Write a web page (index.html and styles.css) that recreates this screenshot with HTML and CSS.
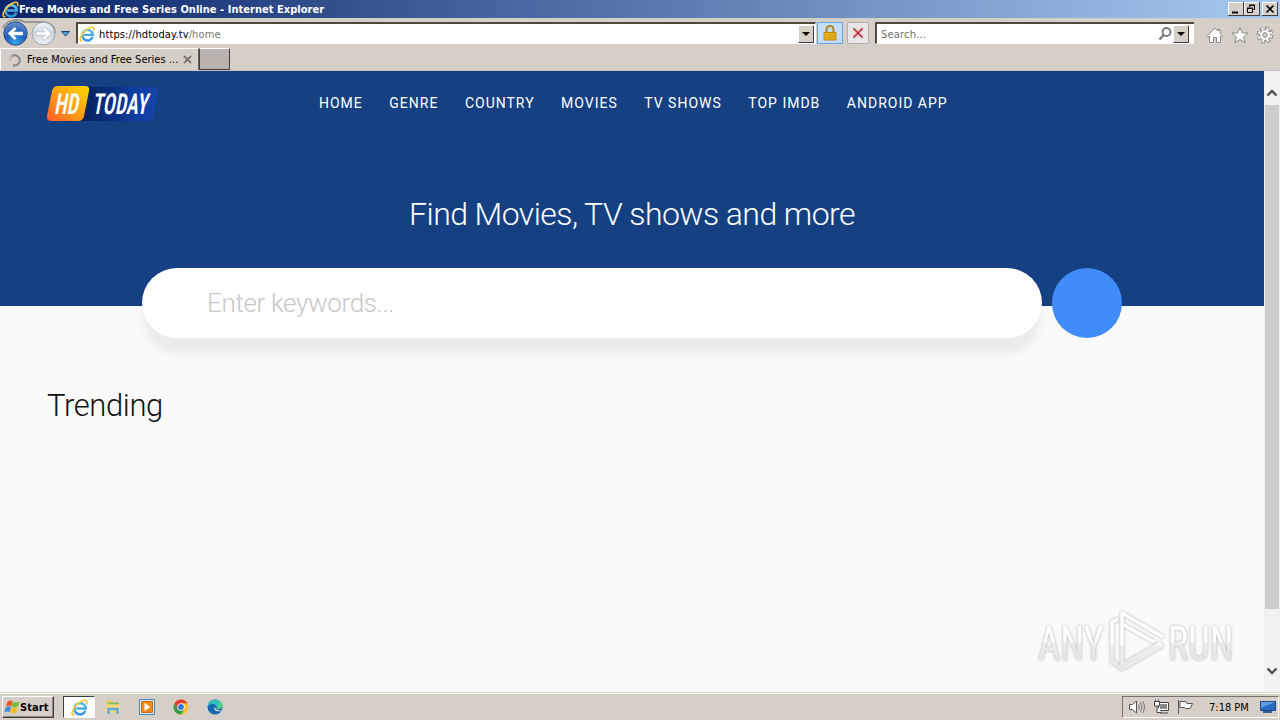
FILE: index.html
```html
<!DOCTYPE html>
<html lang="en">
<head>
    <meta charset="UTF-8">
    <meta name="viewport" content="width=device-width, initial-scale=1.0">
    <title>Free Movies and Free Series Online</title>
    <link rel="stylesheet" href="styles.css">
</head>
<body>
    <!-- shared icons -->
    <svg class="defs" width="0" height="0">
        <defs>
            <linearGradient id="ring" x1="0" y1="0" x2="1" y2="1">
                <stop offset="0" stop-color="#ffe14a"/>
                <stop offset="1" stop-color="#e8a80c"/>
            </linearGradient>
            <linearGradient id="blue" x1="0" y1="0" x2="0" y2="16" gradientUnits="userSpaceOnUse">
                <stop offset="0" stop-color="#6fd0f8"/>
                <stop offset="1" stop-color="#2b8ed8"/>
            </linearGradient>
            <symbol id="ie" viewBox="0 0 16 16">
                <path d="M13.600 11A5.300 5.300 0 1 1 13.900 8.900H5" fill="none" stroke="url(#blue)" stroke-width="2.400"/>
                <path d="M3.300 14.600C.5 15.600.2 12.700 2.600 8.800 5.600 4 11.500.2 14 1.400c1.300.7 1 2.200.4 3.600" fill="none" stroke="url(#ring)" stroke-width="1.500"/>
            </symbol>
        </defs>
    </svg>

    <div class="titlebar">
        <svg class="title-icon" width="17" height="17"><use href="#ie"/></svg>
        <span class="title">Free Movies and Free Series Online - Internet Explorer</span>
        <div class="window-buttons">
            <svg class="win" viewBox="0 0 16 14"><path d="M4 10.500h6" stroke="#000" stroke-width="2"/></svg>
            <svg class="win" viewBox="0 0 16 14"><path d="M5.500 5V3.500h5v4H9M5 3h6M3.500 6.500h5v4h-5zM3 6h6" fill="none" stroke="#000"/></svg>
            <svg class="win close" viewBox="0 0 16 14"><path d="M4.500 3.500l7 7M11.500 3.500l-7 7" stroke="#000" stroke-width="1.600"/></svg>
        </div>
    </div>

    <div class="toolbar">
        <svg class="nav-buttons" width="76" height="29" viewBox="0 0 76 29">
            <defs>
                <radialGradient id="back" cx=".5" cy=".9" r=".9">
                    <stop offset="0" stop-color="#3da4ee"/>
                    <stop offset=".5" stop-color="#1d5fb9"/>
                    <stop offset="1" stop-color="#6b93cd"/>
                </radialGradient>
                <linearGradient id="fwd" x1="0" y1="0" x2="0" y2="1">
                    <stop offset="0" stop-color="#f4f6f8"/>
                    <stop offset=".5" stop-color="#ccd4dd"/>
                    <stop offset="1" stop-color="#eef3f8"/>
                </linearGradient>
            </defs>
            <path d="M3 10C8 0 20 1 25 4h16c8 0 14 4 14 11" fill="none" stroke="#9a9792" stroke-width="2"/>
            <circle cx="15.500" cy="15.500" r="11.700" fill="url(#back)" stroke="#244b86"/>
            <path d="M7.700 15.500l7-6.500 1.900 1.900-2.900 2.900H23v3.400h-9.300l2.900 2.900-1.900 1.900z" fill="#fff"/>
            <circle cx="43.500" cy="15.500" r="11.300" fill="url(#fwd)" stroke="#9da4ac"/>
            <path d="M51.300 15.500l-7-6.500-1.900 1.900 2.900 2.900H36v3.400h9.300l-2.900 2.900 1.900 1.900z" fill="#fff" stroke="#aab2ba" stroke-width=".6"/>
            <path d="M61.500 13.500h8l-4 4.500z" fill="#4f9fdc" stroke="#17406e"/>
        </svg>
        <div class="address">
            <svg width="16" height="16"><use href="#ie"/></svg>
            <span class="url">https://hdtoday.tv<span class="path">/home</span></span>
            <span class="drop"></span>
        </div>
        <div class="tool lock">
            <svg width="16" height="18" viewBox="0 0 16 18">
                <path d="M4.500 9V5.500a3.500 3.500 0 0 1 7 0V9" fill="none" stroke="#b1861c" stroke-width="2"/>
                <path d="M2 8.500h12V16H2z" fill="#e9b21c" stroke="#c48a10"/>
                <path d="M2 11h12M2 13.500h12M8 9v7" stroke="#c79a1c" stroke-width=".7"/>
            </svg>
        </div>
        <div class="tool stop">
            <svg width="12" height="12" viewBox="0 0 12 12"><path d="M1.500 1.500l9 9M10.500 1.500l-9 9" stroke="#e27a82" stroke-width="2.600"/><path d="M1.500 1.500l9 9M10.500 1.500l-9 9" stroke="#a02432"/></svg>
        </div>
        <div class="search">
            <span class="search-text">Search...</span>
            <svg width="16" height="16" viewBox="0 0 16 16"><circle cx="9.500" cy="6" r="4" fill="none" stroke="#777" stroke-width="1.800"/><path d="M6.600 9L2.500 13.500" stroke="#777" stroke-width="2.200"/></svg>
            <span class="drop"></span>
        </div>
        <div class="commands">
            <svg width="18" height="18" viewBox="0 0 18 18"><path d="M1.500 9.500L9 2l3 3V3.500h2V7l2.500 2.500-1 1.200-1-.7v6.500h-4v-5h-3v5h-4V10l-1 .7z" fill="#fff" stroke="#8a8a8a"/></svg>
            <svg width="18" height="18" viewBox="0 0 18 18"><path d="M9 1.500l2.200 5.300 5.800.4-4.400 3.700 1.400 5.600-5-3-5 3 1.400-5.600L1 7.200l5.800-.4z" fill="#fff" stroke="#8a8a8a"/></svg>
            <svg width="18" height="18" viewBox="0 0 18 18">
                <circle cx="9" cy="9" r="6.800" fill="none" stroke="#8a8a8a" stroke-width="3.200" stroke-dasharray="3.300 2.041"/>
                <circle cx="9" cy="9" r="5.500" fill="#fff" stroke="#8a8a8a"/>
                <circle cx="9" cy="9" r="6.200" fill="none" stroke="#fff" stroke-width="2.600" stroke-dasharray="1.600 3.270" stroke-dashoffset="-.7"/>
                <circle cx="9" cy="9" r="2.300" fill="#d6cfc7" stroke="#8a8a8a"/>
            </svg>
        </div>
    </div>

    <div class="tabs">
        <div class="tab">
            <svg width="14" height="14" viewBox="0 0 14 14"><path d="M3.500 3.500A5 5 0 1 1 5 12" fill="none" stroke="#8b8b8b" stroke-width="2"/><path d="M3.500 3.500A5 5 0 0 0 2.200 8" fill="none" stroke="#bbb6b0" stroke-width="2"/></svg>
            <span class="tab-title">Free Movies and Free Series ...</span>
            <svg width="9" height="9" viewBox="0 0 9 9"><path d="M1 1l7 7M8 1L1 8" stroke="#7d7872" stroke-width="1.900"/></svg>
        </div>
        <div class="new-tab"></div>
    </div>

    <div class="viewport">
        <div class="page">
            <header class="hero">
                <div class="header">
                    <svg class="logo" width="112" height="36" viewBox="0 0 112 36">
                        <defs>
                            <linearGradient id="hd" x1="0" y1="1" x2="1" y2="0">
                                <stop offset="0" stop-color="#ff5a2a"/>
                                <stop offset=".45" stop-color="#ff9b16"/>
                                <stop offset="1" stop-color="#ffd600"/>
                            </linearGradient>
                            <linearGradient id="today" x1="0" y1="0" x2="1" y2="0">
                                <stop offset=".1" stop-color="#06235f"/>
                                <stop offset=".8" stop-color="#1040a8"/>
                                <stop offset="1" stop-color="#1545a5"/>
                            </linearGradient>
                        </defs>
                        <path d="M38 1h69q5 0 4 5l-5 25q-1 4-5 4H30z" fill="url(#today)"/>
                        <path d="M11 0h27q5 0 4 5l-5 25q-1 5-6 5H5q-6 0-5-5L5 5q1-5 6-5z" fill="url(#hd)"/>
                        <g class="logo-text" fill="#fff">
                            <text transform="translate(7 28) skewX(-10) scale(.8 1)" textLength="30" lengthAdjust="spacingAndGlyphs">HD</text>
                            <text transform="translate(45 28) skewX(-10) scale(.8 1)" textLength="69" lengthAdjust="spacingAndGlyphs">TODAY</text>
                        </g>
                    </svg>
                    <nav class="menu">
                        <a>HOME</a>
                        <a>GENRE</a>
                        <a>COUNTRY</a>
                        <a>MOVIES</a>
                        <a>TV SHOWS</a>
                        <a>TOP IMDB</a>
                        <a>ANDROID APP</a>
                    </nav>
                </div>
                <h1>Find Movies, TV shows and more</h1>
            </header>
            <div class="search-row">
                <div class="keywords">Enter keywords...</div>
                <div class="go"></div>
            </div>
            <h2>Trending</h2>
        </div>
        <div class="scrollbar">
            <svg width="16" height="34" viewBox="0 0 16 34"><path d="M3.500 24.500L8 20l4.500 4.500" fill="none" stroke="#505050" stroke-width="2.400"/></svg>
            <div class="thumb"></div>
            <svg class="down" width="16" height="34" viewBox="0 0 16 34"><path d="M3.500 10.500L8 15l4.500-4.500" fill="none" stroke="#505050" stroke-width="2.400"/></svg>
        </div>
        <svg class="watermark" width="210" height="76" viewBox="0 0 210 76">
            <defs>
                <linearGradient id="wm" x1="0" y1="0" x2="0" y2="76" gradientUnits="userSpaceOnUse">
                    <stop offset=".5" stop-color="#fff"/>
                    <stop offset=".53" stop-color="#ededed"/>
                    <stop offset="1" stop-color="#e8e8e8"/>
                </linearGradient>
                <linearGradient id="wm-letters" x1="0" y1="-35" x2="0" y2="0" gradientUnits="userSpaceOnUse">
                    <stop offset=".48" stop-color="#fff"/>
                    <stop offset=".52" stop-color="#ececec"/>
                    <stop offset="1" stop-color="#e4e4e4"/>
                </linearGradient>
            </defs>
            <g class="wm-text" fill="url(#wm-letters)">
                <text transform="translate(8 54) scale(.8 1)" textLength="82" lengthAdjust="spacingAndGlyphs">ANY</text>
                <text transform="translate(138 54) scale(.8 1)" textLength="82" lengthAdjust="spacingAndGlyphs">RUN</text>
            </g>
            <g fill="none" stroke="url(#wm)" stroke-width="3.500" stroke-linejoin="round">
                <path d="M82 57V16l6-3"/>
                <path d="M131 37L92 59V7l41 24"/>
                <path d="M92 18l32 18M83 56l9 7 41-24"/>
            </g>
        </svg>
    </div>

    <div class="taskbar">
        <div class="start">
            <svg width="16" height="16" viewBox="0 0 16 16">
                <path d="M3.500 2.500q3-2 5 0L7.200 7.500q-2-1.500-5.200 0z" fill="#e8562a"/>
                <path d="M9 2.800q3 1.500 6.500-.3L14 7.600q-3 1.500-6.300 0z" fill="#76b83c"/>
                <path d="M1.800 8.200q3-1.600 5.200 0L5.600 13.200q-2-1.600-5.300 0z" fill="#3e8bdc"/>
                <path d="M7.500 8.300q3 1.600 6.300 0l-1.400 5.200q-3 1.500-6.300 0z" fill="#f4bd25"/>
            </svg>
            <span>Start</span>
        </div>
        <div class="apps">
            <div class="app current"><svg width="17" height="17"><use href="#ie" width="17" height="17"/></svg></div>
            <div class="app">
                <svg width="16" height="16" viewBox="0 0 16 16"><path d="M1 3V1.500h5L7 3h7v9H1z" fill="#e9c95e"/><path d="M3 3.500h11v2H3z" fill="#79c46a"/><path d="M1 5.500h14v8H1z" fill="#f3da80"/><path d="M3.500 15V10h9v5" fill="none" stroke="#64a9d6" stroke-width="2.500"/></svg>
            </div>
            <div class="app">
                <svg width="16" height="16" viewBox="0 0 16 16"><path d="M.5.500h15v15H.5z" fill="#d9ebf8" stroke="#4c88bd"/><path d="M2.500 2.500h11v11h-11z" fill="#f28a16" stroke="#cc6d0c"/><path d="M5.500 4l6 4-6 4z" fill="#fff"/></svg>
            </div>
            <div class="app">
                <svg width="16" height="16" viewBox="0 0 16 16"><circle cx="8" cy="8" r="7.500" fill="#f6c32b"/><path d="M1.500 4.250A7.500 7.500 0 0 1 14.500 4.250H8L4.750 9.880z" fill="#dd4033"/><path d="M1.500 4.250A7.500 7.500 0 0 0 8 15.500L11.250 9.880H4.750z" fill="#2f9f50"/><circle cx="8" cy="8" r="3.700" fill="#fff"/><circle cx="8" cy="8" r="2.900" fill="#3777df"/></svg>
            </div>
            <div class="app">
                <svg width="16" height="16" viewBox="0 0 16 16"><circle cx="8" cy="8" r="7.500" fill="#1467b4"/><path d="M.5 8C1 3.500 4 .5 8 .5c5 0 8 3.500 7.500 6.500-.5 3-4 3.500-6 2.500 1-2-1-4.500-4-4.500C3 5 1 6.500.5 8z" fill="#35bdbd"/><path d="M8 7.500C6 10 8 13.500 14.300 12 15 11 13 11.500 11.500 11 10 10.700 8 9.800 8 7.500z" fill="#d6cfc7"/><path d="M11 1.200c3 1.300 4.700 3.800 4.500 5.800-.5 3-4 3.500-6 2.500 2-2 3-5 1.500-8.300z" fill="#59ce83"/></svg>
            </div>
        </div>
        <div class="tray">
            <svg width="18" height="16" viewBox="0 0 18 16"><path d="M1.500 5.500h3L8.500 2v12l-4-3.500h-3z" fill="#fff" stroke="#555"/><path d="M10.500 5.500q1.500 2.500 0 5M12.500 3.500q3 4.500 0 9M14.500 2q4 6 0 12" fill="none" stroke="#777"/></svg>
            <svg width="17" height="16" viewBox="0 0 17 16"><path d="M5.500 3.500h10v8h-10zM7 14h8" fill="#fff" stroke="#444"/><path d="M7 5h7v5H7z" fill="#888"/><path d="M1.500 2.500h5V7h-5zM2.500.500v2M5.500.500v2M4 7v6.500h4" fill="#fff" stroke="#444"/></svg>
            <svg width="17" height="16" viewBox="0 0 17 16"><path d="M1.500 1v14M3 2.500h6l1 2h5.500L13 9.500H8.500l-1-1H3z" fill="#fff" stroke="#555"/></svg>
            <span class="clock">7:18 PM</span>
            <svg width="16" height="14" viewBox="0 0 16 14"><path d="M.5 1.500h15v9H.5z" fill="#2769c4" stroke="#1d4687"/><path d="M1 2h14L1 8z" fill="#629ce2"/><path d="M3 12h9" stroke="#365e94" stroke-width="2"/></svg>
        </div>
    </div>
</body>
</html>
```
FILE: styles.css
```css
* {
    box-sizing: border-box;
}
body {
    margin: 0;
    width: 1280px;
    height: 720px;
    overflow: hidden;
    display: flex;
    flex-direction: column;
    font-family: "DejaVu Sans Condensed", "DejaVu Sans", sans-serif;
    font-stretch: condensed;
    font-size: 11px;
    background: #d6cfc7;
}
svg {
    display: block;
    flex: none;
}
.defs {
    position: absolute;
}

/* window title */
.titlebar {
    height: 18px;
    flex: none;
    display: flex;
    align-items: center;
    padding: 0 2px;
    background: linear-gradient(to right, #0a246a, #a6caf0);
}
.title {
    color: #fff;
    font-weight: bold;
    letter-spacing: 0.03px;
    white-space: nowrap;
}
.window-buttons {
    display: flex;
    margin-left: auto;
}
.win {
    width: 16px;
    height: 14px;
    background: #d6cfc7;
    box-shadow: inset -1px -1px #404040, inset 1px 1px #fff;
}
.close {
    margin-left: 2px;
}

/* address row */
.toolbar {
    height: 29px;
    flex: none;
    display: flex;
    align-items: center;
    white-space: nowrap;
}
.address {
    width: 740px;
    height: 22px;
    margin-top: 1px;
    display: flex;
    align-items: center;
    padding: 0 1px 0 1px;
    background: #fff;
    border: 1px solid #fff;
    border-top: 2px solid #50483f;
    border-left: 2px solid #50483f;
}
.url {
    margin-left: 4px;
    padding-top: 1px;
    color: #000;
    letter-spacing: 0.12px;
}
.path {
    color: #777;
}
.drop {
    width: 16px;
    height: 18px;
    margin-left: auto;
    display: flex;
    align-items: center;
    justify-content: center;
    background: #d6cfc7;
    border: 1px solid #fff;
    border-right-color: #404040;
    border-bottom-color: #404040;
}
.drop::before {
    content: '';
    border: 4px solid transparent;
    border-top-color: #000;
    border-bottom: 0;
}
.tool {
    height: 22px;
    display: flex;
    align-items: center;
    justify-content: center;
}
.lock {
    width: 26px;
    margin: 1px 0 0 1px;
    background: #c4ddf8;
    border: 1px solid #66a7e8;
}
.stop {
    width: 22px;
    margin: 1px 0 0 4px;
    background: #e9e7e6;
    border: 1px solid #b2aeb0;
    border-radius: 2px;
}
.search {
    width: 319px;
    height: 22px;
    margin: 1px 0 0 6px;
    display: flex;
    align-items: center;
    padding: 0 5px 0 4px;
    background: #fff;
    border-top: 2px solid #50483f;
    border-left: 2px solid #50483f;
    border-bottom: 1px solid #fff;
}
.search svg {
    margin-left: auto;
}
.search .drop {
    margin-left: 0;
}
.search-text {
    padding-top: 1px;
    color: #707070;
    letter-spacing: 0.2px;
}
.commands {
    display: flex;
    gap: 7px;
    margin: 4px 0 0 12px;
}

/* tabs */
.tabs {
    height: 24px;
    flex: none;
    display: flex;
    border-bottom: 1px solid #c5c2c4;
}
.tab {
    width: 199px;
    margin-top: 1px;
    display: flex;
    align-items: center;
    padding: 0 6px 0 7px;
    border-top: 1px solid #fff;
    border-left: 1px solid #fff;
    border-right: 1px solid #6d6862;
}
.tab-title {
    margin: 0 auto 0 5px;
    letter-spacing: 0.03px;
    white-space: nowrap;
}
.new-tab {
    width: 31px;
    height: 22px;
    margin-top: 1px;
    background: #bab2ad;
    border: 1px solid #403c38;
    border-top-color: #fff;
}

/* web page */
.viewport {
    height: 621px;
    flex: none;
    display: flex;
    position: relative;
    font-family: Roboto, "Liberation Sans", sans-serif;
    font-stretch: normal;
}
.page {
    width: 1264px;
    background: #fafafa;
}
.hero {
    height: 235px;
    background: #154183;
    color: #fff;
}
.header {
    display: flex;
    align-items: flex-start;
    padding: 15px 0 0 47px;
}
.menu {
    display: flex;
    gap: 26.5px;
    margin: 8px 0 0 160px;
    font-size: 14px;
    line-height: 18px;
    letter-spacing: 1px;
    white-space: nowrap;
}
.logo {
    overflow: visible;
}
.logo-text {
    font-family: Roboto, sans-serif;
    font-stretch: condensed;
    font-weight: 600;
    font-size: 29px;
}
h1 {
    margin: 73px 0 0;
    font-size: 32px;
    line-height: 38px;
    font-weight: 300;
    letter-spacing: -0.57px;
    text-align: center;
}
.search-row {
    position: relative;
    display: flex;
    gap: 10px;
    margin: -38px 0 0 142px;
}
.keywords {
    width: 900px;
    height: 70px;
    padding-left: 65px;
    border-radius: 35px;
    background: #fff;
    box-shadow: 0 17px 10px -1px rgba(0, 0, 0, 0.06);
    color: #c8c8c8;
    font-size: 26px;
    font-weight: 300;
    letter-spacing: -0.35px;
    line-height: 70px;
}
.go {
    width: 70px;
    height: 70px;
    border-radius: 50%;
    background: #408cfb;
}
h2 {
    margin: 49px 0 0 47px;
    color: #111;
    font-size: 31px;
    line-height: 38px;
    font-weight: 300;
    letter-spacing: -0.4px;
}
.scrollbar {
    width: 16px;
    display: flex;
    flex-direction: column;
    background: #f1f1f1;
}
.thumb {
    height: 504px;
    margin: 0 1px;
    background: #cdcdcd;
}
.down {
    margin-top: auto;
}
.watermark {
    position: absolute;
    left: 1030px;
    top: 535px;
    filter: drop-shadow(0 0 1.5px rgba(0, 0, 0, 0.3));
}
.wm-text {
    font-family: Roboto, sans-serif;
    font-stretch: condensed;
    font-weight: 400;
    font-size: 49px;
}

/* taskbar */
.taskbar {
    height: 28px;
    flex: none;
    display: flex;
    align-items: center;
    padding: 1px 1px 0 2px;
    border-top: 1px solid #dcd8d2;
    box-shadow: inset 0 1px #fff;
}
.start {
    width: 52px;
    height: 22px;
    display: flex;
    align-items: center;
    padding-left: 1px;
    font-weight: bold;
    letter-spacing: 0.1px;
    border: 1px solid #fff;
    border-right: 1px solid #404040;
    border-bottom: 1px solid #404040;
    box-shadow: inset -1px -1px #8c8780;
}
.apps {
    display: flex;
    margin-left: 9px;
}
.app {
    width: 34px;
    height: 22px;
    display: flex;
    align-items: center;
    justify-content: center;
}
.app.current {
    width: 32px;
    margin-right: 1px;
    background: #fff;
    border: 1px solid #fff;
    border-top-color: #404040;
    border-left-color: #404040;
}
.tray {
    width: 157px;
    height: 22px;
    margin-left: auto;
    display: flex;
    align-items: center;
    padding-left: 5px;
    gap: 7px;
    border: 1px solid #fff;
    border-top-color: #77726c;
    border-left-color: #77726c;
    white-space: nowrap;
}
.clock {
    margin: 0 4px 0 8px;
}
```
